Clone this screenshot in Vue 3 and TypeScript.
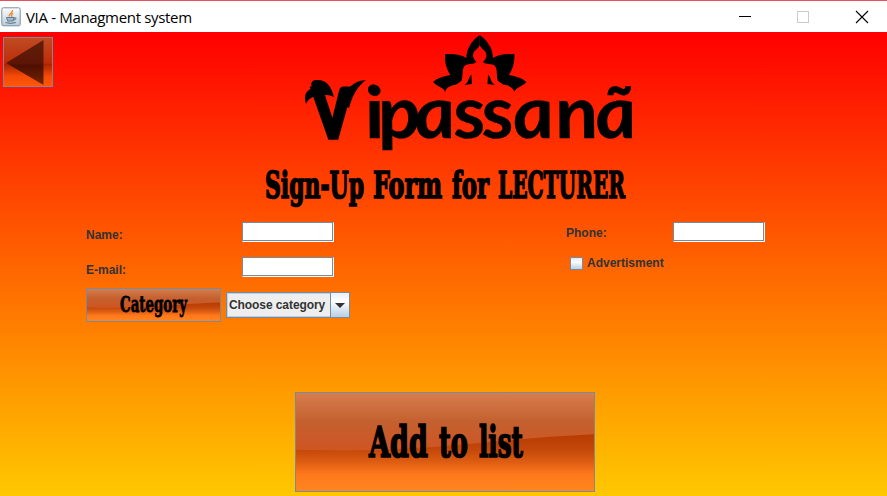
<script setup lang="ts">
import { ref } from 'vue'

interface Word { text: string; x: number; width: number }

const name = ref('')
const email = ref('')
const phone = ref('')
const advertisement = ref(false)

const heading: Word[] = [
  { text: 'Sign-Up', x: 5, width: 99 },
  { text: 'Form', x: 113, width: 69 },
  { text: 'for', x: 192, width: 37 },
  { text: 'LECTURER', x: 238, width: 127 },
]
const addLabel: Word[] = [
  { text: 'Add', x: 73, width: 59 },
  { text: 'to', x: 143, width: 29 },
  { text: 'list', x: 183, width: 44 },
]
</script>

<template>
  <div class="window">
    <header class="titlebar">
      <svg class="java" width="20" height="20" viewBox="0 0 20 20">
        <defs>
          <linearGradient id="tile" x1="0" y1="0" x2="0" y2="1">
            <stop offset="0" stop-color="#fdfefe" />
            <stop offset="1" stop-color="#b9cad8" />
          </linearGradient>
        </defs>
        <rect x=".8" y=".8" width="18.4" height="18" rx="1.5" fill="url(#tile)" stroke="#7890a2" />
        <path d="M11.5 3C12 6 7.5 6.200 8.500 9.500M12 6C10.500 7 10 8 11 10" fill="none" stroke="#ef8a32" stroke-width="1.300" />
        <path d="M5.500 10.500H13L12.200 14H6.700ZM13 11C16 10 15.500 13 12.800 13M4.500 15.500Q9.500 17.500 15 15.500" fill="#7891a8" fill-opacity=".5" stroke="#54748f" stroke-width=".9" />
      </svg>
      <span class="caption">VIA - Managment system</span>
      <svg class="controls" width="130" height="14" viewBox="0 0 130 14" fill="none" shape-rendering="crispEdges">
        <path d="M0 6.500H12" stroke="#000" />
        <rect x="58.500" y="1.500" width="11" height="11" stroke="#ccc" />
        <path d="M117 1L129 13M129 1L117 13" stroke="#000" stroke-width="1.100" shape-rendering="auto" />
      </svg>
    </header>

    <main class="panel">
      <div class="top">
        <button class="glossy back" aria-label="Back">
          <svg width="48" height="48" viewBox="0 0 48 48">
            <defs>
              <linearGradient id="backshade" x1="0" y1="0" x2="0" y2="1">
                <stop offset="0" stop-color="#bf4b23" />
                <stop offset=".52" stop-color="#bd2d08" />
                <stop offset=".55" stop-color="#aa2500" />
                <stop offset=".8" stop-color="#f54b08" />
                <stop offset="1" stop-color="#ff5708" />
              </linearGradient>
              <linearGradient id="arrow" x1="0" y1="0" x2="0" y2="1">
                <stop offset="0" stop-color="#611e0b" />
                <stop offset=".53" stop-color="#5c1504" />
                <stop offset=".56" stop-color="#4d0f00" />
                <stop offset="1" stop-color="#742400" />
              </linearGradient>
            </defs>
            <rect width="48" height="48" fill="url(#backshade)" />
            <path d="M2 25L39.500 2V47Z" fill="url(#arrow)" />
          </svg>
        </button>
        <svg class="logo" width="345" height="126" viewBox="300 32 345 126">
          <defs>
            <g id="petals">
              <path d="M479.700 35C488 41 493 49 493 58C499 54 507 54 514.300 54C515 62 513 69 509 75C516 76 522 78 526.300 82C522 87 516 87 514.300 92C513 87 508 85 504 85L498 81C496 77 498 70 495 66C492 63 486 65 483 62C486 59 487 56 486 53C485 50 481 49 479.700 45Z" />
              <path d="M488 75L487.500 84L495 85C491 83 491 78 488.500 75Z" />
            </g>
          </defs>
          <use href="#petals" />
          <use href="#petals" transform="translate(959.400 0) scale(-1 1)" />
          <path d="M306 104C303 94 307 90 313 88C310 85 311 81 315 80C326 79 331 85 334 97C325 93 310 94 306 104Z" />
          <path d="M341 104C345 88 355 80 366 80C358 86 353 94 349 108Z" />
          <g class="wordmark">
            <text transform="translate(317 137) skewX(8) scale(.78 .920)" x="0" y="0" class="initial">V</text>
            <text transform="translate(0 137.500) skewX(8) scale(1.100 1)" y="0" x="334.500 346.300 379 414.800 440.400 468.700 507.600 543.600">ipassanã</text>
          </g>
        </svg>
      </div>

      <svg class="heading" width="370" height="48" viewBox="0 0 370 48">
        <text v-for="w in heading" :key="w.text" :x="w.x" y="36" font-size="37" :textLength="w.width" lengthAdjust="spacingAndGlyphs">{{ w.text }}</text>
      </svg>

      <form class="form" @submit.prevent>
        <div class="column">
          <div class="row">
            <label for="name">Name:</label>
            <input id="name" v-model="name" class="field" type="text" />
          </div>
          <div class="row">
            <label for="email">E-mail:</label>
            <input id="email" v-model="email" class="field" type="text" />
          </div>
          <div class="category">
            <button class="glossy cat" type="button">
              <svg class="sheen" viewBox="0 0 300 100" preserveAspectRatio="none"><use href="#gloss" /></svg>
              <svg class="label" width="133" height="32" viewBox="0 0 133 32">
                <text x="33" y="22.500" font-size="21.500" textLength="67" lengthAdjust="spacingAndGlyphs">Category</text>
              </svg>
            </button>
            <div class="combo" role="combobox">
              <span>Choose category</span>
              <i class="drop"><svg width="10" height="5" viewBox="0 0 10 5"><path d="M0 0H10L5 5Z" fill="#333" /></svg></i>
            </div>
          </div>
        </div>
        <div class="column right">
          <div class="row phone">
            <label for="phone">Phone:</label>
            <input id="phone" v-model="phone" class="field" type="text" />
          </div>
          <label class="check">
            <input v-model="advertisement" type="checkbox" />
            <span>Advertisment</span>
          </label>
        </div>
      </form>

      <button class="glossy add" type="button">
        <svg class="sheen" viewBox="0 0 300 100" preserveAspectRatio="none">
          <defs>
            <linearGradient id="upper" x1="0" y1="0" x2="0" y2="1">
              <stop offset="0" stop-color="#d77d4e" />
              <stop offset=".5" stop-color="#c4602f" />
              <stop offset="1" stop-color="#d05522" />
            </linearGradient>
            <linearGradient id="lower" x1="0" y1="0" x2="0" y2="1">
              <stop offset=".42" stop-color="#b83b02" />
              <stop offset=".58" stop-color="#c4480a" />
              <stop offset=".7" stop-color="#dc5c12" />
              <stop offset=".83" stop-color="#ff781c" />
              <stop offset="1" stop-color="#ff861e" />
            </linearGradient>
            <g id="gloss">
              <rect width="300" height="100" fill="url(#lower)" />
              <path d="M0 0H300V42C205 46 130 62 0 58Z" fill="url(#upper)" />
            </g>
          </defs>
          <use href="#gloss" />
        </svg>
        <svg class="label" width="298" height="98" viewBox="0 0 298 98">
          <text v-for="w in addLabel" :key="w.text" :x="w.x" y="63.500" font-size="43" :textLength="w.width" lengthAdjust="spacingAndGlyphs">{{ w.text }}</text>
        </svg>
      </button>
    </main>
  </div>
</template>

<style>
body { margin: 0; overflow: hidden; }
</style>

<style scoped>
* { box-sizing: border-box; }
.window { width: 887px; height: 496px; display: flex; flex-direction: column; font-family: "Liberation Sans", Arial, sans-serif; }
.titlebar { height: 32px; flex: none; display: flex; align-items: center; border-top: 1px solid #e85060; background: #fff; padding: 0 18px 0 1px; }
.caption { margin-left: 5px; font: 15px/20px "Open Sans", "Noto Sans", sans-serif; letter-spacing: -.33px; color: #000; }
.controls { margin-left: auto; }
.panel { flex: 1; display: flex; flex-direction: column; background: linear-gradient(#ff0000, #ffc800); }
.top { display: flex; height: 126px; padding-left: 3px; }
.glossy { padding: 0; border: 1px solid #7a8a99; display: grid; overflow: hidden; background: #c4602f; }
.glossy > * { grid-area: 1 / 1; min-width: 0; min-height: 0; }
.back { width: 50px; height: 50px; margin-top: 5px; }
.logo { margin-left: 247px; }
.wordmark { font: italic bold 72px Lato, sans-serif; stroke: #000; stroke-width: .3; }
.initial { stroke-width: 6; }
.heading { margin: 4px 0 0 260px; flex: none; overflow: visible; }
.heading text, .label text { font-family: "DejaVu Serif", "Liberation Serif", serif; font-weight: bold; stroke: #000; stroke-width: 1.700; }
.label { overflow: visible; }
.form { display: flex; padding: 12px 0 0 86px; height: 112px; color: #333; font-size: 12px; font-weight: bold; }
.column { width: 480px; }
.column.right { width: 200px; }
.row { display: flex; height: 35px; }
.row label { width: 156px; padding-top: 6px; line-height: 14px; }
.row.phone { height: 34px; }
.row.phone label { width: 107px; padding-top: 4px; }
.field { width: 92px; height: 20px; padding: 0 3px; outline: none; background: #fff; border: 1px solid #7a8a99; border-right-color: #fff; border-bottom-color: #fff; box-shadow: inset -1px -1px #7a8a99, inset 1px 1px #fff; }
.category { display: flex; align-items: flex-start; gap: 5px; margin-top: -4px; }
.cat { width: 135px; height: 34px; }
.sheen { width: 100%; height: 100%; display: block; }
.cat .label text { stroke-width: .8; }
.combo { display: flex; margin-top: 4px; width: 124px; height: 26px; border: 1px solid #7a8a99; background: #eee; line-height: 25px; box-shadow: inset 0 0 0 1px #b8cfe5; }
.combo span { width: 103px; padding-left: 2px; white-space: nowrap; letter-spacing: -.08px; }
.drop { flex: 1; display: grid; place-items: center; border-left: 1px solid #7a8a99; background: linear-gradient(#e8f0f7, #fff 35%, #b8cfe5); }
.check { display: flex; gap: 4px; align-items: center; padding-left: 4px; height: 14px; }
.check input { appearance: none; margin: 0; width: 13px; height: 13px; border: 1px solid #7a8a99; background: linear-gradient(#dde8f2, #fff 35%, #b8cfe5); }
.add { width: 300px; height: 100px; margin: 70px 0 0 295px; flex: none; }
</style>
